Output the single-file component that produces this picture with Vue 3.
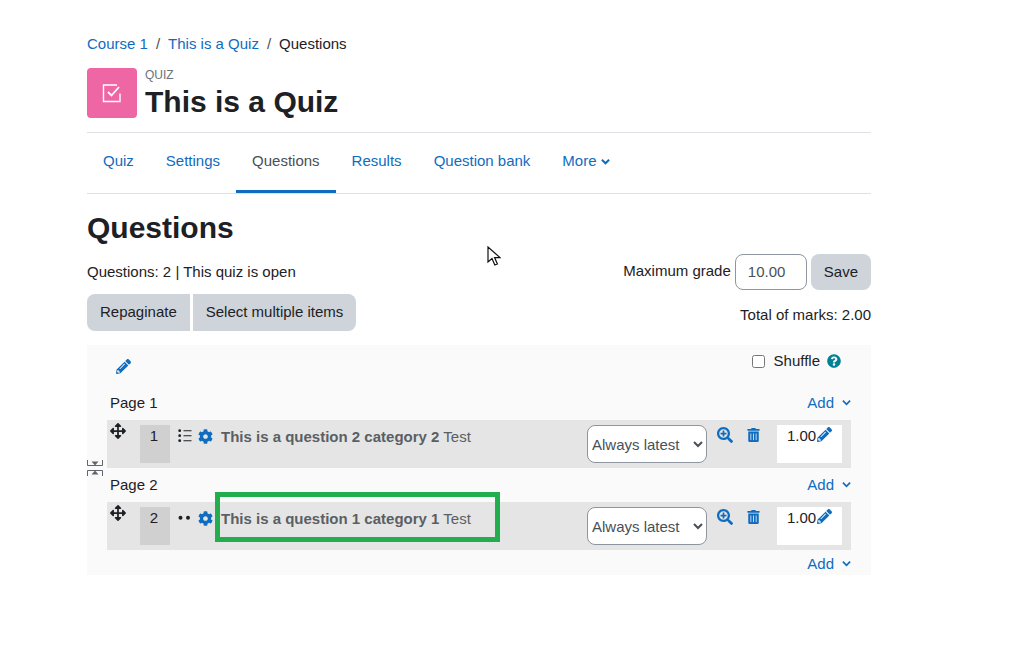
<script setup>
const tabs = [
  { label: 'Quiz' },
  { label: 'Settings' },
  { label: 'Questions', active: true },
  { label: 'Results' },
  { label: 'Question bank' },
]
const pages = [
  { page: 'Page 1', num: 1, title: 'This is a question 2 category 2', dots: 'list' },
  { page: 'Page 2', num: 2, title: 'This is a question 1 category 1', dots: 'pair' },
]
const PENCIL = 'M497.9 142.1l-46.1 46.1c-4.7 4.7-12.3 4.7-17 0l-111-111c-4.7-4.7-4.7-12.3 0-17l46.1-46.1c18.7-18.7 49.1-18.7 67.9 0l60.1 60.1c18.8 18.7 18.8 49.1 0 67.9zM284.2 99.8L21.6 362.4.4 483.9c-2.9 16.4 11.4 30.6 27.8 27.8l121.5-21.3 262.6-262.6c4.7-4.7 4.7-12.3 0-17l-111-111c-4.8-4.7-12.4-4.7-17.1 0zM124.1 339.9c-5.5-5.5-5.5-14.3 0-19.8l154-154c5.5-5.5 14.3-5.5 19.8 0s5.5 14.3 0 19.8l-154 154c-5.5 5.5-14.3 5.5-19.8 0zM88 424h48v36.3l-64.5 11.3-31.1-31.1L51.7 376H88v48z'
const COG = 'M487.4 315.7l-42.6-24.6c4.3-23.2 4.3-47 0-70.2l42.6-24.6c4.9-2.8 7.1-8.6 5.5-14-11.1-35.6-30-67.8-54.7-94.6-3.8-4.1-10-5.1-14.8-2.3L380.8 110c-17.9-15.4-38.5-27.3-60.8-35.1V25.8c0-5.6-3.9-10.5-9.4-11.7-36.7-8.2-74.3-7.8-109.2 0-5.5 1.2-9.4 6.1-9.4 11.7V75c-22.2 7.9-42.8 19.8-60.8 35.1L88.7 85.5c-4.9-2.8-11-1.9-14.8 2.3-24.7 26.7-43.6 58.9-54.7 94.6-1.7 5.4.6 11.2 5.5 14L67.3 221c-4.3 23.2-4.3 47 0 70.2l-42.6 24.6c-4.9 2.8-7.1 8.6-5.5 14 11.1 35.6 30 67.8 54.7 94.6 3.8 4.1 10 5.1 14.8 2.3l42.6-24.6c17.9 15.4 38.5 27.3 60.8 35.1v49.2c0 5.6 3.9 10.5 9.4 11.7 36.7 8.2 74.3 7.8 109.2 0 5.5-1.2 9.4-6.1 9.4-11.7v-49.2c22.2-7.9 42.8-19.8 60.8-35.1l42.6 24.6c4.9 2.8 11 1.9 14.8-2.3 24.7-26.7 43.6-58.9 54.7-94.6 1.5-5.5-.7-11.3-5.6-14.1zM256 336c-44.1 0-80-35.9-80-80s35.9-80 80-80 80 35.9 80 80-35.9 80-80 80z'
const ZOOM = 'M304 192v32c0 6.6-5.4 12-12 12h-56v56c0 6.6-5.4 12-12 12h-32c-6.6 0-12-5.4-12-12v-56h-56c-6.6 0-12-5.4-12-12v-32c0-6.6 5.4-12 12-12h56v-56c0-6.6 5.4-12 12-12h32c6.6 0 12 5.4 12 12v56h56c6.6 0 12 5.4 12 12zm201 284.7L476.7 505c-9.4 9.4-24.6 9.4-33.9 0L343 405.3c-4.5-4.5-7-10.6-7-17V372c-35.3 27.6-79.7 44-128 44C93.1 416 0 322.9 0 208S93.1 0 208 0s208 93.1 208 208c0 48.3-16.4 92.7-44 128h16.3c6.4 0 12.5 2.5 17 7l99.7 99.7c9.3 9.4 9.3 24.6 0 34zM344 208c0-75.2-60.8-136-136-136S72 132.8 72 208s60.8 136 136 136 136-60.8 136-136z'
const TRASH = 'M32 464a48 48 0 0 0 48 48h288a48 48 0 0 0 48-48V128H32zm272-256a16 16 0 0 1 32 0v224a16 16 0 0 1-32 0zm-96 0a16 16 0 0 1 32 0v224a16 16 0 0 1-32 0zm-96 0a16 16 0 0 1 32 0v224a16 16 0 0 1-32 0zM432 32H312l-9.4-18.7A24 24 0 0 0 281.1 0H166.8a23.72 23.72 0 0 0-21.4 13.3L136 32H16A16 16 0 0 0 0 48v32a16 16 0 0 0 16 16h416a16 16 0 0 0 16-16V48a16 16 0 0 0-16-16z'
const HELP = 'M504 256c0 136.997-111.043 248-248 248S8 392.997 8 256C8 119.083 119.043 8 256 8s248 111.083 248 248zM262.655 90c-54.497 0-89.255 22.957-116.549 63.758-3.536 5.286-2.353 12.415 2.715 16.258l34.699 26.31c5.205 3.947 12.621 3.008 16.665-2.122 17.864-22.658 30.113-35.797 57.303-35.797 20.429 0 45.698 13.148 45.698 32.958 0 14.976-12.363 22.667-32.534 33.976C247.128 238.528 216 254.941 216 296v4c0 6.627 5.373 12 12 12h56c6.627 0 12-5.373 12-12v-1.333c0-28.462 83.186-29.647 83.186-106.667 0-58.002-60.165-102-116.531-102zM256 338c-25.365 0-46 20.635-46 46 0 25.364 20.635 46 46 46s46-20.636 46-46c0-25.365-20.635-46-46-46z'
const MOVE = 'M352.201 425.775l-79.196 79.196c-9.373 9.373-24.568 9.373-33.941 0l-79.196-79.196c-15.119-15.119-4.411-40.971 16.971-40.97h51.162L228 284H127.196v51.162c0 21.382-25.851 32.09-40.971 16.971L7.029 272.937c-9.373-9.373-9.373-24.569 0-33.941L86.225 159.8c15.119-15.119 40.971-4.411 40.971 16.971V228H228V127.196h-51.23c-21.382 0-32.09-25.851-16.971-40.971l79.196-79.196c9.373-9.373 24.568-9.373 33.941 0l79.196 79.196c15.119 15.119 4.411 40.971-16.971 40.971h-51.162V228h100.804v-51.162c0-21.382 25.851-32.09 40.97-16.971l79.196 79.196c9.373 9.373 9.373 24.569 0 33.941L425.773 352.2c-15.119 15.119-40.971 4.411-40.97-16.971V284H284v100.804h51.23c21.382 0 32.09 25.851 16.971 40.971z'
</script>

<template>
  <div class="page">
    <nav class="crumbs">
      <a>Course 1</a><span class="sep">/</span><a>This is a Quiz</a><span class="sep">/</span><span>Questions</span>
    </nav>

    <header class="head">
      <div class="quiz-icon">
        <svg width="24" height="24" viewBox="0 0 24 24" fill="none" stroke="#fff" stroke-width="1.4">
          <path d="M20 12.5V20.5H3.5V4H17" />
          <path d="M8 11l3.5 3.5L19 6" stroke-width="1.8" />
        </svg>
      </div>
      <div class="head-text">
        <div class="kicker">QUIZ</div>
        <h1>This is a Quiz</h1>
      </div>
    </header>

    <ul class="tabs">
      <li v-for="t in tabs" :key="t.label" :class="{ active: t.active }">{{ t.label }}</li>
      <li class="more">More
        <svg width="9" height="9" viewBox="0 0 10 10" fill="none" stroke="#0f6cbf" stroke-width="2.2"><path d="M1 3l4 4 4-4" /></svg>
      </li>
    </ul>

    <h2>Questions</h2>

    <div class="info">
      <div class="info-left">
        <div class="status">Questions: 2 | This quiz is open</div>
        <div class="btns">
          <button class="btn">Repaginate</button>
          <button class="btn">Select multiple items</button>
        </div>
      </div>
      <div class="info-right">
        <div class="grade">
          <span class="grade-label">Maximum grade</span>
          <input class="grade-input" value="10.00" />
          <button class="btn save">Save</button>
        </div>
        <div class="total">Total of marks: 2.00</div>
      </div>
    </div>

    <section class="panel">
      <div class="panel-top">
        <svg class="top-pencil" width="15" height="15" viewBox="0 0 512 512"><path :d="PENCIL" fill="#0f6cbf" /></svg>
        <label class="shuffle">
          <input type="checkbox" />
          <span>Shuffle</span>
          <svg width="14" height="14" viewBox="0 0 512 512"><path :d="HELP" fill="#008196" /></svg>
        </label>
      </div>

      <div v-for="(p, i) in pages" :key="p.page" class="block">
        <div class="page-line">
          <span>{{ p.page }}</span>
          <span class="add">Add
            <svg width="9" height="9" viewBox="0 0 10 10" fill="none" stroke="#0f6cbf" stroke-width="1.9"><path d="M1 3l4 4 4-4" /></svg>
          </span>
        </div>
        <div class="row">
          <svg class="move" width="16" height="16" viewBox="0 0 512 512"><path :d="MOVE" fill="#1d2125" /></svg>
          <div class="num">{{ p.num }}</div>
          <svg v-if="p.dots === 'list'" class="qtype" width="14" height="14" viewBox="0 0 14 14">
            <circle cx="1.7" cy="1.7" r="1.4" fill="#1d2125" /><circle cx="1.7" cy="6.7" r="1.4" fill="#1d2125" /><circle cx="1.7" cy="11.7" r="1.4" fill="#1d2125" />
            <path d="M5.5 1.7h8M5.5 6.7h8M5.5 11.7h8" stroke="#1d2125" stroke-width="1.1" />
          </svg>
          <svg v-else class="qtype" width="14" height="14" viewBox="0 0 14 14">
            <circle cx="2.5" cy="6.7" r="2" fill="#1d2125" /><circle cx="10" cy="6.7" r="2" fill="#1d2125" />
          </svg>
          <svg class="cog" width="15" height="15" viewBox="0 0 512 512"><path :d="COG" fill="#0f6cbf" /></svg>
          <div class="qname"><b>{{ p.title }}</b> Test</div>
          <select class="version"><option>Always latest</option></select>
          <svg class="zoom" width="16" height="16" viewBox="0 0 512 512"><path :d="ZOOM" fill="#0f6cbf" /></svg>
          <svg class="trash" width="13" height="14" viewBox="0 0 448 512"><path :d="TRASH" fill="#0f6cbf" /></svg>
          <div class="mark">1.00<svg width="15" height="15" viewBox="0 0 512 512"><path :d="PENCIL" fill="#0f6cbf" /></svg></div>
        </div>
        <svg v-if="i === 0" class="brk" width="16" height="16" viewBox="0 0 16 16" fill="#5f666c">
          <path d="M.5 0v5.5h15V0" fill="none" stroke="#5f666c" />
          <path d="M8 5.5l3.5-4h-7zM8 10.5l3.5 4h-7z" />
          <path d="M.5 16v-5.5h15V16" fill="none" stroke="#5f666c" />
        </svg>
      </div>
      <div class="page-line last">
        <span></span>
        <span class="add">Add
          <svg width="9" height="9" viewBox="0 0 10 10" fill="none" stroke="#0f6cbf" stroke-width="1.9"><path d="M1 3l4 4 4-4" /></svg>
        </span>
      </div>
      <div class="highlight"></div>
    </section>

    <svg class="cursor" width="14" height="21" viewBox="0 0 14 21">
      <path d="M1 1v15l4-3.5 2.8 6.5 2.6-1.1-2.8-6.3H13z" fill="#fff" stroke="#111" stroke-width="1.2" />
    </svg>
  </div>
</template>

<style scoped>
.page {
  position: relative;
  width: 784px;
  height: 650px;
  box-sizing: border-box;
  margin-left: 87px;
  padding-top: 35px;
  font-family: "Liberation Sans", Arial, sans-serif;
  font-size: 15px;
  line-height: 18px;
  color: #1d2125;
}
.crumbs { display: flex; height: 18px; }
.crumbs a { color: #0f6cbf; }
.sep { padding: 0 8px; color: #495057; }
.head { display: flex; margin-top: 15px; padding-bottom: 14px; border-bottom: 1px solid #dee2e6; }
.quiz-icon {
  width: 50px; height: 50px; border-radius: 4px; background: #ef66a5;
  display: flex; align-items: center; justify-content: center;
}
.head-text { margin-left: 8px; }
.kicker { font-size: 12px; line-height: 14px; color: #6a737b; }
h1 { margin: 2px 0 -2px; font-size: 30px; line-height: 36px; font-weight: 700; }
.tabs {
  list-style: none; margin: 0; padding: 0; display: flex; height: 60px;
  border-bottom: 1px solid #dee2e6;
}
.tabs li { padding: 19px 16px 0; color: #0f6cbf; box-sizing: border-box; height: 60px; white-space: nowrap; }
.tabs li.active { color: #495057; border-bottom: 3px solid #0f6cbf; }
h2 { margin: 16px 0 0; font-size: 30px; line-height: 36px; font-weight: 700; }
.info { display: flex; justify-content: space-between; margin-top: 8px; }
.status { margin-top: 9px; }
.btns { display: flex; gap: 3px; margin-top: 13px; }
.btn {
  font: inherit; color: #1d2125; background: #ced4da; border: 0;
  height: 37px; padding: 0 13px 2px; border-radius: 8px;
}
.btns .btn:first-child { border-radius: 8px 0 0 8px; }
.btns .btn:last-child { border-radius: 0 8px 8px 0; }
.info-right { display: flex; flex-direction: column; align-items: flex-end; }
.grade { display: flex; align-items: center; height: 36px; }
.grade-label { margin-right: 4px; margin-top: -2px; }
.grade-input {
  font: inherit; color: #495057; width: 72px; height: 36px; box-sizing: border-box;
  border: 1px solid #8f959e; border-radius: 8px; padding: 0 12px 2px; background: #fff;
}
.save { margin-left: 4px; height: 36px; padding: 0 13px; }
.total { margin-top: 16px; }
.panel { position: relative; margin-top: 14px; background: #fafafa; height: 230px; }
.panel-top { position: relative; height: 41px; }
.top-pencil { position: absolute; left: 29px; top: 14px; }
.shuffle { position: absolute; right: 30px; top: 7px; display: flex; align-items: center; gap: 8px; }
.shuffle input { width: 13px; height: 13px; margin: 0 0 0 -1px; }
.shuffle span { margin-left: 1px; }
.shuffle svg { margin-left: -1px; }
.block { position: relative; }
.page-line {
  display: flex; justify-content: space-between; align-items: flex-end;
  height: 34px; box-sizing: border-box; padding: 0 20px 8px 23px;
}
.add { color: #0f6cbf; display: inline-flex; align-items: center; gap: 8px; }
.add svg { margin-top: -1px; }
.row {
  position: relative; display: flex; align-items: flex-start;
  margin: 0 20px; height: 48px; background: #e5e5e5;
}
.move { position: absolute; left: 3px; top: 3px; }
.num {
  margin: 5px 0 0 33px; width: 30px; height: 38px; background: #d0d0d0;
  text-align: center; padding-top: 2px; box-sizing: border-box; padding-right: 2px;
}
.qtype { margin: 9px 0 0 8px; }
.cog { margin: 9px 0 0 6px; }
.qname { margin: 8px 0 0 8px; width: 366px; color: #5a5f64; white-space: nowrap; }
.version {
  font: inherit; color: #495057; width: 120px; height: 38px; margin-top: 5px;
  border: 1px solid #8f959e; border-radius: 8px; background: #fff; padding: 0;
}
.zoom { margin: 7px 0 0 10px; }
.trash { margin: 8px 0 0 14px; }
.mark {
  margin: 5px 0 0 17px; width: 65px; height: 38px; background: #fff; box-sizing: border-box;
  padding: 2px 0 0 10px; display: flex; align-items: flex-start;
}
.mark svg { margin: 0 0 0 1px; }
.brk { position: absolute; left: 0; top: 74px; }
.last { height: 25px; padding-bottom: 2px; }
.highlight {
  position: absolute; left: 128px; top: 147px; width: 285px; height: 50px;
  box-sizing: border-box; border: 5px solid #22ad4f; pointer-events: none;
}
.cursor { position: absolute; left: 400px; top: 246px; }
</style>
